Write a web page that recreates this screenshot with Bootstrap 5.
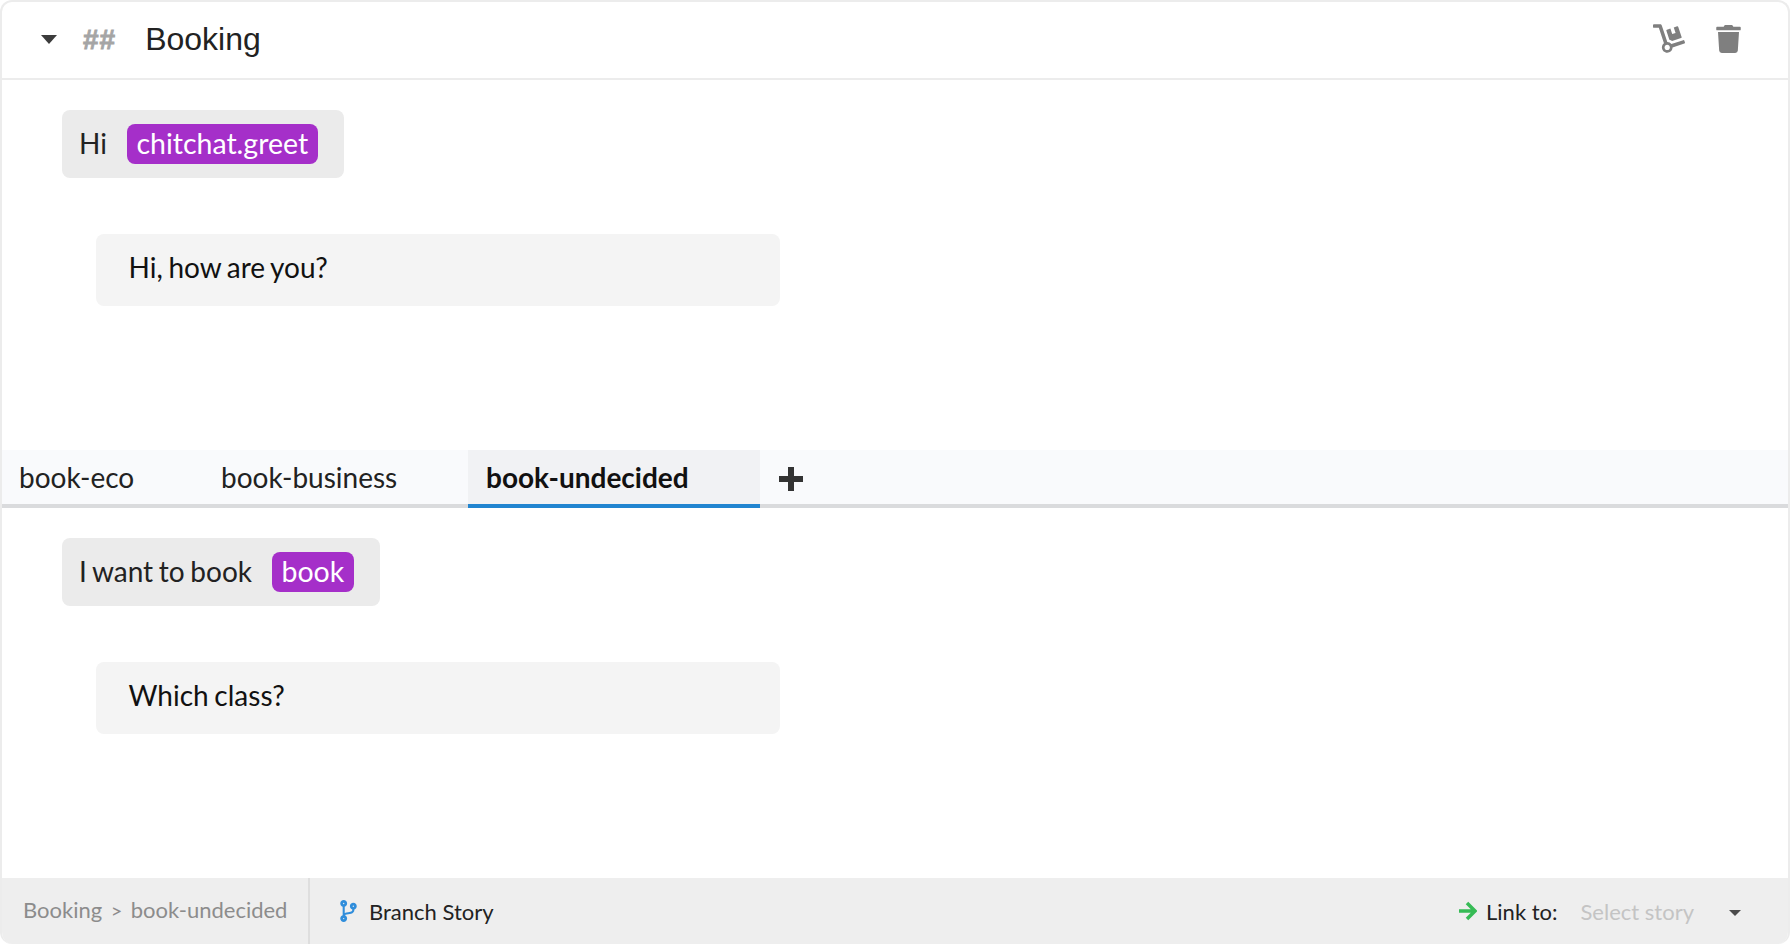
<!DOCTYPE html>
<html lang="en">
<head>
    <meta charset="UTF-8">
    <meta name="viewport" content="width=device-width, initial-scale=1.0">
    <title>Booking</title>
    <link href="https://cdn.jsdelivr.net/npm/bootstrap@5.3.3/dist/css/bootstrap.min.css" rel="stylesheet">
    <style>
        html, body { height: 100%; }
        body { font-family: Lato, sans-serif; font-size: 28px; color: #222; background: #fff; }
        .story-box { height: 944px; border: 2px solid #ececec; border-bottom: 0; border-radius: 12px; overflow: hidden; }
        .story-head { height: 78px; flex: none; border-bottom: 2px solid #ececec; padding: 0 47px 0 39px; }
        .caret-down { width: 0; height: 0; margin-bottom: 1px; border-left: 8px solid transparent; border-right: 8px solid transparent; border-top: 9px solid #3c3c3c; }
        .hashes { font-family: "Liberation Sans", sans-serif; font-weight: 700; font-size: 28px; color: #a5a5a5; margin-left: 26px; letter-spacing: 1px; -webkit-text-stroke: .8px #a5a5a5; }
        .story-title { font-family: "Liberation Sans", sans-serif; font-size: 32px; line-height: 1; color: #222; margin: 0 0 2px 29px; }
        .head-icon { fill: #7f7f7f; margin-bottom: 3px; }
        .thread { padding-left: 60px; word-spacing: -1.5px; }
        .user-say { height: 68px; padding: 0 26px 0 17px; background: #ebebeb; border-radius: 8px; }
        .say-text { margin-bottom: 2px; }
        .entity-tag { background: #a52fc9; color: #fff; border-radius: 8px; height: 40px; margin-left: 20px; padding: 0 9.5px 2px; font-size: 28.5px; display: flex; align-items: center; }
        .bot-say { width: 684px; height: 72px; margin: 56px 0 0 34px; padding: 0 32.5px 6px; background: #f4f4f4; border-radius: 8px; color: #111; }
        .branch-tabs { height: 58px; flex: none; background: #f9fafc; border-bottom: 4px solid #dadbdd; }
        .branch-tab { height: 58px; padding: 0 17px 4px; color: #222; white-space: nowrap; }
        .branch-tab + .branch-tab { padding-left: 18px; }
        .branch-tab.is-active { width: 292px; background: #f1f2f4; border-bottom: 4px solid #2185d0; padding-bottom: 0; font-weight: 700; color: #111; }
        .tab-add { margin-left: 18px; }
        .story-foot { height: 66px; flex: none; background: #eee; font-size: 22px; margin-top: auto; }
        .crumbs { width: 308px; padding: 0 0 3px 21px; color: #8c8c8c; height: 100%; border-right: 2px solid #dedede; white-space: nowrap; }
        .crumb-sep { margin: 0 8.5px; font-size: 20px; }
        .branch-link { color: #222; margin-left: 30px; }
        .select-hint { color: #c4c4c4; margin-left: 23px; }
        .small-caret { width: 0; height: 0; margin-top: 3px; margin-left: 35px; margin-right: 47px; border-left: 6px solid transparent; border-right: 6px solid transparent; border-top: 6px solid #4a4a4a; }
    </style>
</head>
<body>
<div class="story-box d-flex flex-column">
    <div class="story-head d-flex align-items-center">
        <span class="caret-down"></span>
        <span class="hashes">##</span>
        <h1 class="story-title fw-normal">Booking</h1>
        <div class="ms-auto d-flex align-items-center" style="gap:31px">
            <svg class="head-icon" width="32" height="29" viewBox="0 0 576 512">
                <path d="M294.2 277.7c18 5 34.7 13.4 49.5 24.7l161.5-53.8c8.4-2.8 12.9-11.9 10.1-20.2L454.900 47.2c-2.800-8.400-11.900-12.900-20.200-10.100l-61.100 20.400 33.100 99.400L346 177l-33.100-99.400-61.600 20.500c-8.300 2.800-12.800 11.900-10 20.200l53 159.400zm281 48.700L565 296c-2.800-8.400-11.900-12.900-20.200-10.100l-213.500 71.200c-17.200-22-43.600-36.400-73.500-37L158.400 21.900C154 8.800 141.800 0 128 0H16C7.200 0 0 7.200 0 16v32c0 8.800 7.200 16 16 16h88.900l92.200 276.700c-26.100 20.400-41.700 53.600-36 90.500 6.100 39.400 37.900 72.300 77.300 79.200 60.200 10.700 112.300-34.800 113.400-92.600l213.300-71.200c8.300-2.800 12.800-11.900 10.100-20.200zM256 464c-26.500 0-48-21.500-48-48s21.500-48 48-48 48 21.500 48 48-21.500 48-48 48z"/>
            </svg>
            <svg class="head-icon" width="25" height="28" viewBox="0 0 448 512">
                <path d="M432 32H312l-9.400-18.700A24 24 0 0 0 281.100 0H166.800a23.720 23.720 0 0 0-21.400 13.300L136 32H16A16 16 0 0 0 0 48v32a16 16 0 0 0 16 16h416a16 16 0 0 0 16-16V48a16 16 0 0 0-16-16zM53.200 467a48 48 0 0 0 47.900 45h245.800a48 48 0 0 0 47.900-45L416 128H32z"/>
            </svg>
        </div>
    </div>

    <div class="thread" style="padding-top:30px;height:370px">
        <div class="user-say d-inline-flex align-items-center">
            <span class="say-text">Hi</span>
            <span class="entity-tag">chitchat.greet</span>
        </div>
        <div class="bot-say d-flex align-items-center">Hi, how are you?</div>
    </div>

    <div class="branch-tabs d-flex align-items-start">
        <div class="branch-tab d-flex align-items-center" style="width:201px">book-eco</div>
        <div class="branch-tab d-flex align-items-center" style="width:265px">book-business</div>
        <div class="branch-tab is-active d-flex align-items-center">book-undecided</div>
        <div class="branch-tab tab-add d-flex align-items-center p-0">
            <svg width="26" height="26" viewBox="0 0 26 26" fill="#333"><path d="M10 1h6v9h9v6h-9v9h-6v-9H1v-6h9z"/></svg>
        </div>
    </div>

    <div class="thread" style="padding-top:30px">
        <div class="user-say d-inline-flex align-items-center">
            <span class="say-text">I want to book</span>
            <span class="entity-tag">book</span>
        </div>
        <div class="bot-say d-flex align-items-center">Which class?</div>
    </div>

    <div class="story-foot d-flex align-items-center">
        <div class="crumbs d-flex align-items-center">Booking<span class="crumb-sep">&gt;</span>book-undecided</div>
        <div class="branch-link d-flex align-items-center" style="gap:12px">
            <svg width="17" height="22" viewBox="0 0 384 512" fill="#2f8ddb">
                <path d="M384 144c0-44.200-35.800-80-80-80s-80 35.800-80 80c0 36.400 24.300 67.100 57.500 76.800-.6 16.100-4.200 28.500-11 36.900-15.400 19.200-49.300 22.400-85.200 25.700-28.200 2.600-57.400 5.400-81.300 16.900v-144c32.500-10.200 56-40.500 56-76.300 0-44.200-35.800-80-80-80S0 35.800 0 80c0 35.800 23.500 66.100 56 76.300v199.300C23.500 365.900 0 396.200 0 432c0 44.200 35.800 80 80 80s80-35.800 80-80c0-34-21.200-63.100-51.200-74.600 3.100-5.200 7.800-9.800 14.900-13.400 16.200-8.200 40.400-10.400 66.100-12.800 42.200-3.900 90-8.400 118.200-43.400 14-17.400 21.100-39.800 21.500-67.900 31.600-10.800 54.500-40.700 54.500-75.900zM80 64c8.800 0 16 7.200 16 16s-7.200 16-16 16-16-7.200-16-16 7.200-16 16-16zm0 384c-8.800 0-16-7.200-16-16s7.200-16 16-16 16 7.200 16 16-7.200 16-16 16zm224-320c8.800 0 16 7.200 16 16s-7.200 16-16 16-16-7.200-16-16 7.200-16 16-16z"/>
            </svg>
            <span>Branch Story</span>
        </div>
        <div class="ms-auto d-flex align-items-center">
            <svg width="18" height="20" viewBox="0 0 18 20" fill="none" stroke="#36bb55" stroke-width="3.500"><path d="M0 10h15M8 2l8 8-8 8"/></svg>
            <span style="margin-left:9px">Link to:</span>
            <span class="select-hint">Select story</span>
            <span class="small-caret"></span>
        </div>
    </div>
</div>
<script src="https://cdn.jsdelivr.net/npm/bootstrap@5.3.3/dist/js/bootstrap.bundle.min.js"></script>
</body>
</html>
